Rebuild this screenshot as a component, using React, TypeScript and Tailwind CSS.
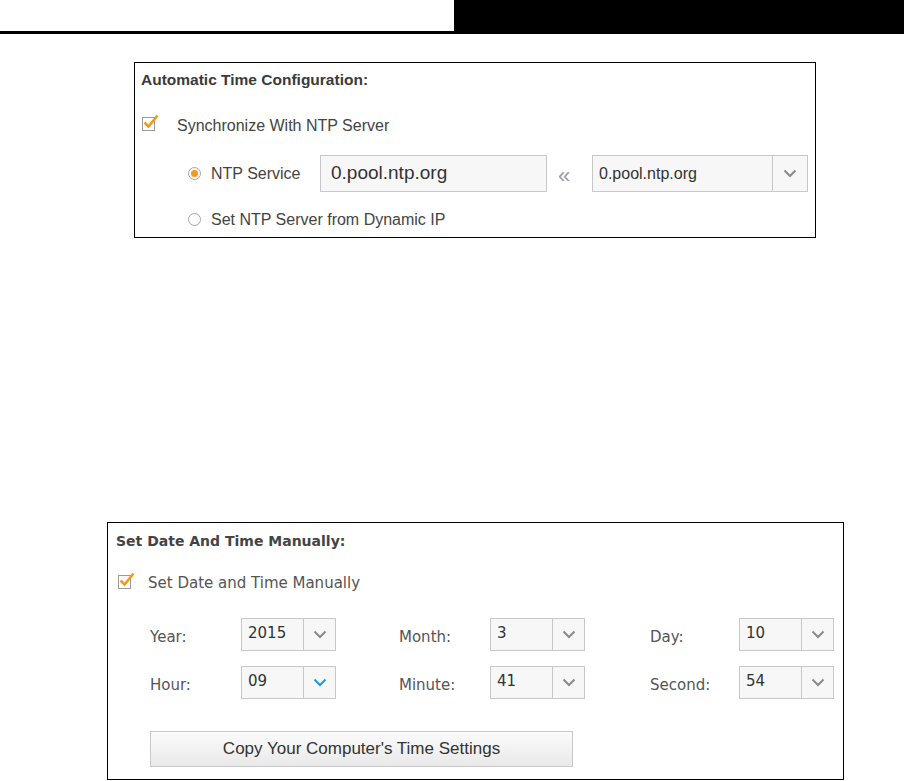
import React from 'react';

const Chevron = ({ blue = false }: { blue?: boolean }) => (
  <svg width="14" height="9" viewBox="0 0 14 9" fill="none">
    <path d="M1.5 1.5 L7 7 L12.5 1.5" stroke={blue ? '#1d9bd7' : '#8a8a8a'} strokeWidth="2" />
  </svg>
);

const CheckBox = () => (
  <span className="relative inline-block h-[14px] w-[13px] border border-[#9a9a9a] bg-white">
    <svg className="absolute -top-[5px] -left-[1px]" width="18" height="18" viewBox="0 0 18 18" fill="none">
      <path d="M2.5 9.5 L6.5 13.5 L15.5 2.5" stroke="#f39a1e" strokeWidth="2.6" />
    </svg>
  </span>
);

const Radio = ({ on = false }: { on?: boolean }) => (
  <span className="flex h-[13px] w-[13px] items-center justify-center rounded-full border border-[#a5a5a5] bg-white">
    {on && <span className="h-[7px] w-[7px] rounded-full bg-[#f39a1e]" />}
  </span>
);

const Select = ({ value, blue = false }: { value: string; blue?: boolean }) => (
  <div className="flex h-[33px] w-[95px] border border-[#c8c8c8] bg-[#f7f7f7]">
    <div className="flex flex-1 items-center pb-[3px] pl-[6px] text-[15px] text-[#333]">{value}</div>
    <div className="flex w-[32px] items-center justify-center border-l border-[#c8c8c8]">
      <Chevron blue={blue} />
    </div>
  </div>
);

export default function App() {
  const sans = { fontFamily: '"Liberation Sans", Arial, sans-serif' };
  const verd = { fontFamily: '"DejaVu Sans", Verdana, sans-serif' };

  return (
    <div className="h-[781px] w-[904px] overflow-hidden bg-white" style={sans}>
      {/* page header strip */}
      <div className="flex h-[34px]">
        <div className="w-[454px] border-b-[3px] border-black" />
        <div className="flex-1 bg-black" />
      </div>

      {/* automatic time */}
      <div className="ml-[134px] mt-[28px] h-[176px] w-[682px] border border-black px-[6px] text-[#444]">
        <div className="flex h-[28px] items-end text-[15.5px] font-bold text-[#3a3a3a]">Automatic Time Configuration:</div>
        <div className="mt-[26px] flex h-[17px] items-center">
          <span className="ml-[1px]"><CheckBox /></span>
          <span className="ml-[22px] text-[16px]">Synchronize With NTP Server</span>
        </div>
        <div className="mt-[21px] flex h-[37px] items-center">
          <span className="ml-[47px]"><Radio on /></span>
          <span className="ml-[10px] w-[109px] text-[16px]">NTP Service</span>
          <div className="flex h-[37px] w-[227px] items-center border border-[#c8c8c8] bg-[#f7f7f7] pl-[10px] text-[19px] text-[#333]">
            0.pool.ntp.org
          </div>
          <span className="ml-[11px] mt-[4px] w-[34px] text-[22px] leading-none text-[#9a9a9a]">«</span>
          <div className="flex h-[37px] w-[216px] border border-[#c8c8c8] bg-[#f7f7f7]">
            <div className="flex flex-1 items-center pl-[6px] text-[16px] text-[#333]">0.pool.ntp.org</div>
            <div className="flex w-[35px] items-center justify-center border-l border-[#c8c8c8]">
              <Chevron />
            </div>
          </div>
        </div>
        <div className="mt-[19px] flex h-[17px] items-center">
          <span className="ml-[47px]"><Radio /></span>
          <span className="ml-[10px] text-[16px]">Set NTP Server from Dynamic IP</span>
        </div>
      </div>

      {/* manual time */}
      <div className="ml-[107px] mt-[284px] h-[258px] w-[737px] border border-black pl-[8px] text-[#555]" style={verd}>
        <div className="flex h-[29px] items-end text-[14px] font-bold text-[#444]">Set Date And Time Manually:</div>
        <div className="mt-[24px] flex h-[15px] items-center">
          <span className="ml-[2px]"><CheckBox /></span>
          <span className="ml-[17px] text-[15px]">Set Date and Time Manually</span>
        </div>
        <div className="ml-[34px] mt-[27px] flex flex-col gap-[15px] text-[15px]">
          <div className="flex items-center">
            <span className="w-[91px] pt-[6px]">Year:</span>
            <Select value="2015" />
            <span className="ml-[63px] w-[91px] pt-[6px]">Month:</span>
            <Select value="3" />
            <span className="ml-[65px] w-[89px] pt-[6px]">Day:</span>
            <Select value="10" />
          </div>
          <div className="flex items-center">
            <span className="w-[91px] pt-[6px]">Hour:</span>
            <Select value="09" blue />
            <span className="ml-[63px] w-[91px] pt-[6px]">Minute:</span>
            <Select value="41" />
            <span className="ml-[65px] w-[89px] pt-[6px]">Second:</span>
            <Select value="54" />
          </div>
        </div>
        <button
          className="ml-[34px] mt-[32px] flex h-[36px] w-[423px] items-center justify-center border border-[#c8c8c8] bg-gradient-to-b from-[#fbfbfb] to-[#e9e9e9] text-[17px] text-[#333]"
          style={sans}
        >
          Copy Your Computer's Time Settings
        </button>
      </div>
    </div>
  );
}
